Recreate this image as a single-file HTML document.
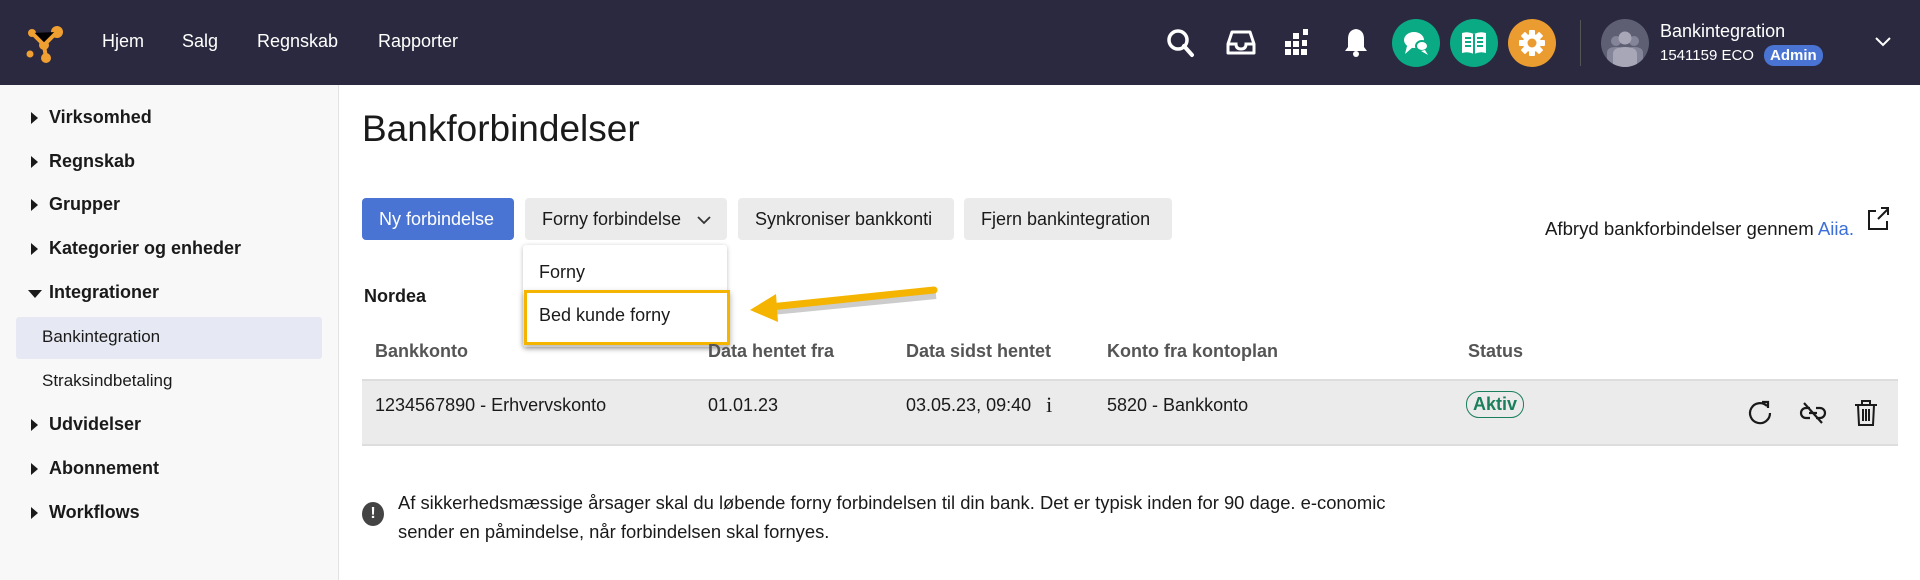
<!DOCTYPE html>
<html><head><meta charset="utf-8"><style>
*{box-sizing:border-box;margin:0;padding:0}
body{width:1920px;height:580px;overflow:hidden;background:#fff;font-family:"Liberation Sans",Arial,sans-serif;color:#1a1a1a;position:relative}
.a{position:absolute;white-space:nowrap}
.hdr{position:absolute;left:0;top:0;width:1920px;height:85px;background:#2a2940}
.nav{color:#fff;font-size:18px;top:31px}
.side{position:absolute;left:0;top:85px;width:339px;height:495px;background:#f8f8f8;border-right:1px solid #e2e2e2}
.si{font-size:18px;font-weight:bold;left:49px}
.car{left:31px;width:0;height:0;border-top:6px solid transparent;border-bottom:6px solid transparent;border-left:7px solid #1a1a1a}
.btn{top:198px;height:42px;border-radius:4px;background:#ebebeb;font-size:18px;line-height:42px;padding:0 17px}
.th{top:341px;font-size:18px;font-weight:bold;color:#555}
.td{top:394px;font-size:18px;line-height:22px}
.circ{top:19px;width:48px;height:48px;border-radius:50%}
</style></head><body>
<div class="hdr"></div>
<svg class="a" style="left:26px;top:24px" width="38" height="40" viewBox="0 0 38 40"><circle cx="31" cy="8" r="6" fill="#f0a030"/><circle cx="6" cy="9" r="4" fill="#f0a030"/><circle cx="18" cy="21" r="5" fill="#f0a030"/><circle cx="4" cy="30" r="3.5" fill="#f0a030"/><circle cx="20" cy="34" r="5" fill="#f0a030"/><path d="M6 9L18 21L31 8M18 21L20 34" stroke="#f0a030" stroke-width="4"/></svg>
<div class="a nav" style="left:102px">Hjem</div>
<div class="a nav" style="left:182px">Salg</div>
<div class="a nav" style="left:257px">Regnskab</div>
<div class="a nav" style="left:378px">Rapporter</div>
<svg class="a" style="left:1166px;top:28px" width="30" height="30" viewBox="0 0 30 30"><circle cx="12" cy="12" r="9" stroke="#fff" stroke-width="3.5" fill="none"/><path d="M18 18L26 27" stroke="#fff" stroke-width="4" stroke-linecap="round"/></svg>
<svg class="a" style="left:1226px;top:30px" width="30" height="26" viewBox="0 0 30 26"><path d="M6 2H24L28 14V23H2V14Z" stroke="#fff" stroke-width="3" fill="none" stroke-linejoin="round"/><path d="M2 14H10Q10 19 15 19Q20 19 20 14H28" stroke="#fff" stroke-width="3" fill="none"/></svg>
<svg class="a" style="left:1285px;top:29px" width="26" height="28" viewBox="0 0 26 28"><g fill="#fff"><rect x="0" y="12" width="6" height="6"/><rect x="0" y="20" width="6" height="6"/><rect x="8" y="12" width="6" height="6"/><rect x="8" y="20" width="6" height="6"/><rect x="16" y="20" width="6" height="6"/><rect x="8" y="4" width="6" height="6"/><rect x="17" y="11" width="5" height="6"/><rect x="18" y="0" width="5" height="6"/></g></svg>
<svg class="a" style="left:1344px;top:27px" width="24" height="32" viewBox="0 0 24 32"><path d="M12 2Q4 3 4 12V20L1 24H23L20 20V12Q20 3 12 2Z" fill="#fff"/><circle cx="12" cy="27" r="3" fill="#fff"/></svg>
<div class="a circ" style="left:1392px;background:#0aaa84"></div>
<svg class="a" style="left:1402px;top:30px" width="28" height="26" viewBox="0 0 28 26"><ellipse cx="12" cy="10" rx="10" ry="8" fill="#fff"/><path d="M5 16L3 24L11 17Z" fill="#fff"/><ellipse cx="20" cy="16" rx="6" ry="5" fill="#fff" stroke="#0aaa84" stroke-width="2"/><path d="M23 20L26 25L19 21Z" fill="#fff"/></svg>
<div class="a circ" style="left:1450px;background:#0aaa84"></div>
<svg class="a" style="left:1460px;top:30px" width="28" height="26" viewBox="0 0 28 26"><path d="M2 3Q8 1 14 4Q20 1 26 3V23Q20 21 14 24Q8 21 2 23Z" fill="#fff"/><path d="M5 8H11M5 12H11M5 16H11M17 8H23M17 12H23M17 16H23M14 4V24" stroke="#0aaa84" stroke-width="2"/></svg>
<div class="a circ" style="left:1508px;background:#eb9c30"></div>
<svg class="a" style="left:1518px;top:29px" width="28" height="28" viewBox="0 0 28 28"><g fill="#fff"><circle cx="14" cy="14" r="9"/><rect x="11" y="1" width="6" height="26" rx="1"/><rect x="11" y="1" width="6" height="26" rx="1" transform="rotate(45 14 14)"/><rect x="11" y="1" width="6" height="26" rx="1" transform="rotate(90 14 14)"/><rect x="11" y="1" width="6" height="26" rx="1" transform="rotate(135 14 14)"/></g><circle cx="14" cy="14" r="4.5" fill="#eb9c30"/></svg>
<div class="a" style="left:1580px;top:20px;width:1px;height:46px;background:#555"></div>
<div class="a" style="left:1601px;top:19px;width:48px;height:48px;border-radius:50%;background:#5e5f73;overflow:hidden"><svg width="48" height="48"><circle cx="15" cy="22" r="5" fill="#858599"/><circle cx="33" cy="22" r="5" fill="#858599"/><path d="M6 48V34Q6 28 15 28Q24 28 24 34V48Z" fill="#858599"/><path d="M24 48V34Q24 28 33 28Q42 28 42 34V48Z" fill="#858599"/><circle cx="24" cy="19" r="6.5" fill="#a7a7b7"/><path d="M12 48V35Q12 28 24 28Q36 28 36 35V48Z" fill="#a7a7b7"/></svg></div>
<div class="a" style="left:1660px;top:21px;color:#fff;font-size:18px">Bankintegration</div>
<div class="a" style="left:1660px;top:47px;color:#fff;font-size:15px">1541159 ECO</div>
<div class="a" style="left:1764px;top:45px;height:21px;padding:0 6px;border-radius:10px;background:#4a74d4;color:#fff;font-size:15px;font-weight:bold;line-height:21px">Admin</div>
<svg class="a" style="left:1874px;top:36px" width="18" height="12"><path d="M2 2L9 9L16 2" stroke="#fff" stroke-width="2" fill="none"/></svg>

<div class="side"></div>
<div class="a" style="left:16px;top:317px;width:306px;height:42px;background:#e6e9f3;border-radius:3px"></div>
<div class="a car" style="top:112px"></div><div class="a si" style="top:107px">Virksomhed</div>
<div class="a car" style="top:156px"></div><div class="a si" style="top:151px">Regnskab</div>
<div class="a car" style="top:199px"></div><div class="a si" style="top:194px">Grupper</div>
<div class="a car" style="top:243px"></div><div class="a si" style="top:238px">Kategorier og enheder</div>
<div class="a" style="left:28px;top:290px;width:0;height:0;border-left:7px solid transparent;border-right:7px solid transparent;border-top:8px solid #1a1a1a"></div><div class="a si" style="top:282px">Integrationer</div>
<div class="a" style="left:42px;top:327px;font-size:17px">Bankintegration</div>
<div class="a" style="left:42px;top:371px;font-size:17px">Straksindbetaling</div>
<div class="a car" style="top:419px"></div><div class="a si" style="top:414px">Udvidelser</div>
<div class="a car" style="top:463px"></div><div class="a si" style="top:458px">Abonnement</div>
<div class="a car" style="top:507px"></div><div class="a si" style="top:502px">Workflows</div>

<div class="a" style="left:362px;top:108px;font-size:37px">Bankforbindelser</div>
<div class="a btn" style="left:362px;width:152px;background:#4a74d4;color:#fff">Ny forbindelse</div>
<div class="a btn" style="left:525px;width:202px">Forny forbindelse <svg width="16" height="10" style="margin-left:10px"><path d="M2 2L8 8L14 2" stroke="#333" stroke-width="1.8" fill="none"/></svg></div>
<div class="a btn" style="left:738px;width:216px">Synkroniser bankkonti</div>
<div class="a btn" style="left:964px;width:208px">Fjern bankintegration</div>
<div class="a" style="left:1545px;top:218px;font-size:18.6px">Afbryd bankforbindelser gennem <span style="color:#3c6fd8">Aiia.</span></div>
<svg class="a" style="left:1866px;top:206px" width="24" height="26"><path d="M10 5H3V23H21V15" stroke="#1a1a1a" stroke-width="2" fill="none"/><path d="M12 13L22 3M15 2H22V9" stroke="#1a1a1a" stroke-width="2" fill="none"/></svg>

<div class="a" style="left:523px;top:245px;width:204px;height:102px;background:#fff;border-radius:3px;box-shadow:0 1px 5px rgba(0,0,0,.25)"></div>
<div class="a" style="left:539px;top:262px;font-size:18px">Forny</div>
<div class="a" style="left:524px;top:290px;width:206px;height:55px;border:3px solid #f5b400;background:#fff;box-shadow:0 3px 6px rgba(0,0,0,.3)"></div>
<div class="a" style="left:539px;top:305px;font-size:18px">Bed kunde forny</div>
<svg class="a" style="left:740px;top:280px" width="200" height="46"><path d="M194 12L30 28" stroke="rgba(0,0,0,.2)" stroke-width="8" transform="translate(2,3)"/><path d="M194 10L30 27" stroke="#f5b400" stroke-width="7" stroke-linecap="round"/><path d="M10 30L36 14L38 42Z" fill="#f5b400"/></svg>

<div class="a" style="left:364px;top:286px;font-size:18px;font-weight:bold">Nordea</div>
<div class="a th" style="left:375px">Bankkonto</div>
<div class="a th" style="left:708px">Data hentet fra</div>
<div class="a th" style="left:906px">Data sidst hentet</div>
<div class="a th" style="left:1107px">Konto fra kontoplan</div>
<div class="a th" style="left:1468px">Status</div>
<div class="a" style="left:362px;top:379px;width:1536px;height:67px;background:#ebebeb;border-top:2px solid #ddd;border-bottom:2px solid #ddd"></div>
<div class="a td" style="left:375px">1234567890 - Erhvervskonto</div>
<div class="a td" style="left:708px">01.01.23</div>
<div class="a td" style="left:906px">03.05.23, 09:40 <span style="font-family:'Liberation Serif',serif;font-size:22px;line-height:22px;margin-left:10px;vertical-align:top">i</span></div>
<div class="a td" style="left:1107px">5820 - Bankkonto</div>
<div class="a" style="left:1466px;top:391px;height:27px;padding:0 6px;border:1.5px solid #1a7f5a;border-radius:13px;color:#1a7f5a;font-weight:bold;font-size:18px;line-height:24px">Aktiv</div>
<svg class="a" style="left:1746px;top:399px" width="28" height="28"><path d="M21 7A10 10 0 1 0 24 14" stroke="#1a1a1a" stroke-width="2.2" fill="none"/><path d="M16 3H22V9" stroke="#1a1a1a" stroke-width="2.2" fill="none"/></svg>
<svg class="a" style="left:1799px;top:399px" width="28" height="28"><path d="M11 9H7A5 5 0 0 0 7 19H11M17 9H21A5 5 0 0 1 21 19H17M10 14H18M5 4L23 24" stroke="#1a1a1a" stroke-width="2.2" fill="none"/></svg>
<svg class="a" style="left:1852px;top:398px" width="28" height="30"><path d="M3 7H25M10 7V3H18V7M6 7L7 27H21L22 7M11 11V23M14 11V23M17 11V23" stroke="#1a1a1a" stroke-width="2" fill="none"/></svg>

<div class="a" style="left:362px;top:502px;width:22px;height:24px;border-radius:50%;background:#444;color:#fff;font-weight:bold;font-size:16px;text-align:center;line-height:24px">!</div>
<div class="a" style="left:398px;top:488px;font-size:18.4px;line-height:29px;white-space:normal;width:1020px">Af sikkerhedsmæssige årsager skal du løbende forny forbindelsen til din bank. Det er typisk inden for 90 dage. e-conomic sender en påmindelse, når forbindelsen skal fornyes.</div>
</body></html>
